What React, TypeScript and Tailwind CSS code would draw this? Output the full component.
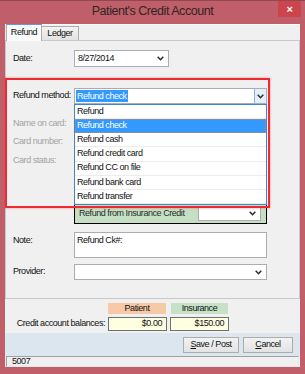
import React from 'react';

const Chevron = () => (
  <svg width="7" height="5" viewBox="0 0 7 5" className="shrink-0">
    <path d="M0.7 0.8 L3.5 3.7 L6.3 0.8" fill="none" stroke="#2b2b2b" strokeWidth="1.5" />
  </svg>
);

type ComboProps = { value?: string; className?: string };

const Combo = ({ value, className = '' }: ComboProps) => (
  <div className={`flex items-center justify-between border border-[#abadb3] bg-white pl-[3px] pr-[4px] ${className}`}>
    <span>{value}</span>
    <Chevron />
  </div>
);

const Row = ({ label, gray, className = '', children }: { label: string; gray?: boolean; className?: string; children?: React.ReactNode }) => (
  <div className={`flex items-center ${className}`}>
    <div className={`w-[61px] shrink-0 ${gray ? 'text-[#a3a3a3]' : ''}`}>{label}</div>
    {children}
  </div>
);

const options = ['Refund', 'Refund check', 'Refund cash', 'Refund credit card', 'Refund CC on file', 'Refund bank card', 'Refund transfer'];

export default function App() {
  return (
    <div className="relative w-[305px] h-[374px] bg-[#c05f69] flex flex-col font-['Liberation_Sans',Arial,sans-serif] text-[9px] tracking-[-0.45px] text-[#111] overflow-hidden">
      {/* title bar */}
      <div className="relative h-[24px] shrink-0 border-t border-[#8e4a52] flex items-center justify-center">
        <span className="text-[12.5px] tracking-[-0.45px] text-[#2e2426] -mt-[2px]">Patient's Credit Account</span>
        <div className="absolute right-[4px] top-0 w-[23px] h-[16px] bg-[#cc454d] flex items-center justify-center text-white text-[11px] font-bold leading-none">×</div>
      </div>

      {/* window body */}
      <div className="mx-[5px] h-[343px] bg-[#f0f0f0] flex flex-col">
        {/* tabs */}
        <div className="h-[16px] flex items-end border-t border-[#fafafa]">
          <div className="relative z-10 ml-[1px] -mb-px w-[36px] h-[17px] bg-[#fbfbfb] border border-[#adadad] border-t-[#5d9bd8] border-b-0 flex items-center justify-center">
            Refund
          </div>
          <div className="w-[37px] h-[14px] bg-gradient-to-b from-[#f3f3f3] to-[#e2e2e2] border border-[#adadad] border-l-0 border-b-0 flex items-center justify-center">
            Ledger
          </div>
        </div>

        {/* tab panel */}
        <div className="relative h-[259px] shrink-0 border border-[#c9c9c9] bg-[#f0f0f0] pl-[7px] pt-[9px]">
          <Row label="Date:">
            <Combo value="8/27/2014" className="w-[95px] h-[17px]" />
          </Row>
          <Row label="Refund method:" className="mt-[21px]">
            <div className="w-[193px] h-[16px] flex border border-[#abadb3] bg-white">
              <div className="flex-1 flex items-center pl-[1px]">
                <span className="bg-[#3399ff] text-white px-[1px] leading-[12px]">Refund check</span>
              </div>
              <div className="w-[12px] bg-[#e3effb] border-l border-[#7eb4ea] flex items-center justify-center">
                <Chevron />
              </div>
            </div>
          </Row>
          <Row label="Name on card:" gray className="mt-[13px] h-[14px]" />
          <Row label="Card number:" gray className="mt-[4px] h-[14px]" />
          <Row label="Card status:" gray className="mt-[5px] h-[14px]" />
          <Row label="" className="mt-[35px]">
            <div className="w-[193px] h-[21px] border border-black bg-[#c5dfc4] flex items-center pl-[4px] pr-[5px]">
              <span className="text-[#2a2a2a]">Refund from Insurance Credit</span>
              <Combo className="ml-auto w-[63px] h-[15px]" />
            </div>
          </Row>
          <div className="flex items-start mt-[8px]">
            <div className="w-[61px] shrink-0 pt-[2px]">Note:</div>
            <div className="w-[193px] h-[26px] border border-[#abadb3] bg-white pl-[2px] pt-[1px]">Refund Ck#:</div>
          </div>
          <Row label="Provider:" className="mt-[6px]">
            <Combo className="w-[193px] h-[16px]" />
          </Row>

          {/* open dropdown list */}
          <div className="absolute left-[68px] top-[63px] w-[193px] h-[101px] border border-[#3f86c6] bg-white flex flex-col">
            {options.map((o) => (
              <div
                key={o}
                className={`h-[14.15px] flex items-center pl-[2px] ${
                  o === 'Refund check'
                    ? 'bg-[#3399ff] text-white outline outline-1 outline-dotted outline-[#c98a4b] -outline-offset-1'
                    : 'border-b border-[#ececec]'
                }`}
              >
                {o}
              </div>
            ))}
          </div>
        </div>

        {/* balances */}
        <div className="h-[34px] shrink-0 pt-[4px]">
          <div className="flex ml-[103px] gap-[5px]">
            <div className="w-[58px] h-[11px] bg-[#f6caa6] flex items-center justify-center">Patient</div>
            <div className="w-[57px] h-[11px] bg-[#c7e1c8] flex items-center justify-center">Insurance</div>
          </div>
          <div className="flex items-center mt-[3px]">
            <div className="w-[101px] text-right pr-[1px]">Credit account balances:</div>
            <div className="ml-[2px] w-[59px] h-[14px] border border-[#707070] bg-[#ffffe1] flex items-center justify-end pr-[4px]">$0.00</div>
            <div className="ml-[3px] w-[59px] h-[14px] border border-[#707070] bg-[#ffffe1] flex items-center justify-end pr-[4px]">$150.00</div>
          </div>
        </div>

        {/* buttons */}
        <div className="h-[23px] shrink-0 bg-[#dce6ef] flex items-center justify-end gap-[4px] pr-[7px]">
          <div className="w-[56px] h-[16px] border border-[#adadad] bg-gradient-to-b from-[#f2f2f2] to-[#e3e3e3] flex items-center justify-center">
            <span><span className="underline">S</span>ave / Post</span>
          </div>
          <div className="w-[50px] h-[16px] border border-[#adadad] bg-gradient-to-b from-[#f2f2f2] to-[#e3e3e3] flex items-center justify-center">
            <span><span className="underline">C</span>ancel</span>
          </div>
        </div>

        {/* status bar */}
        <div className="h-[11px] shrink-0 mx-[1px] border border-t-[#a0a0a0] border-l-[#a0a0a0] border-r-[#e8e8e8] border-b-[#e8e8e8] pl-[5px] flex items-center bg-[#f0f0f0]">5007</div>
      </div>

      {/* annotation highlight */}
      <div className="absolute left-[5px] top-[78px] w-[265px] h-[130px] border-2 border-[#ee2a33] shadow-[0_0_2px_rgba(255,40,40,0.5)] pointer-events-none" />
    </div>
  );
}
